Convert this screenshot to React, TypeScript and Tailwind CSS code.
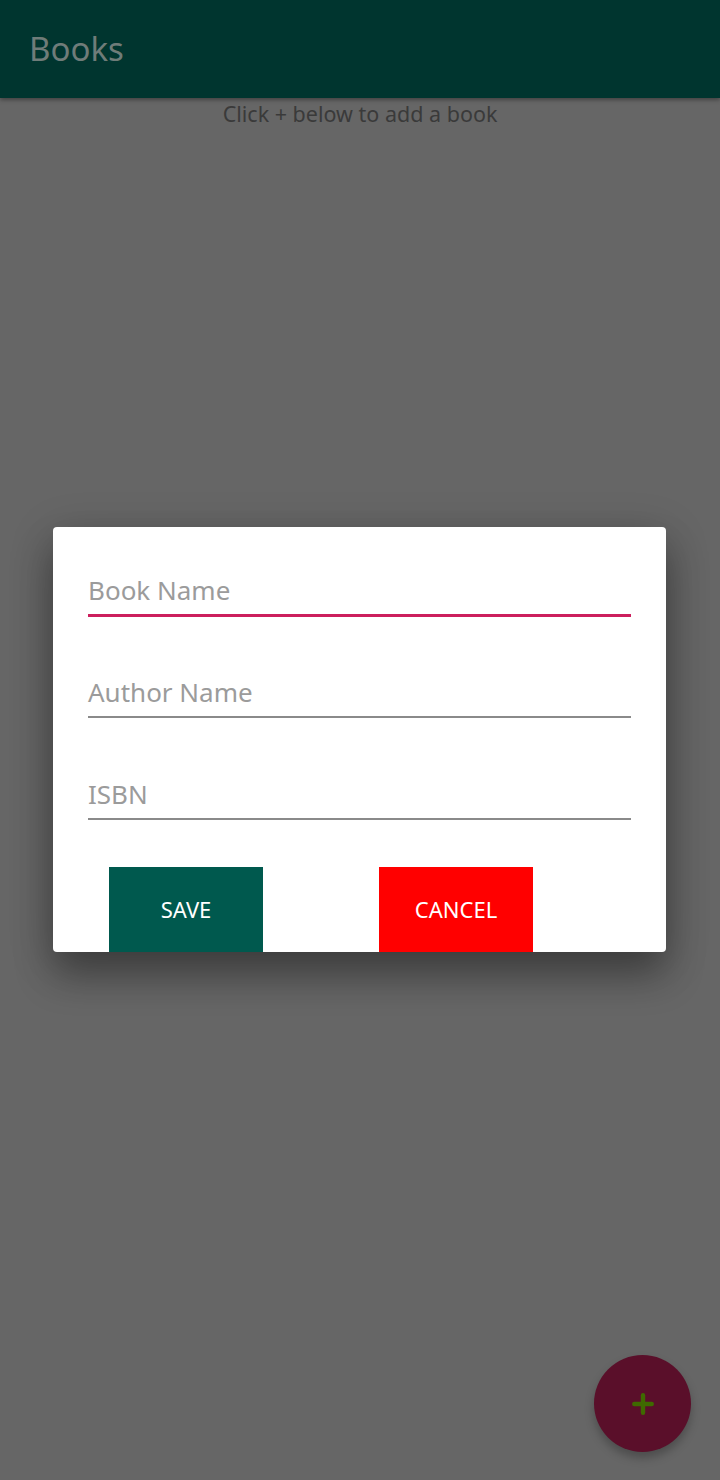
import { Plus } from "lucide-react";

const font = { fontFamily: '"Noto Sans", "Open Sans", sans-serif' };

function Field({ label, active }: { label: string; active?: boolean }) {
	return (
		<div className="flex flex-col">
			<div className="text-[26px] leading-[34px] text-[#9b9b9b] pb-[7px]">{label}</div>
			<div className={active ? "h-[3px] bg-[#cc1f5d]" : "h-[2px] bg-[#8a8a8a] mb-[1px]"} />
		</div>
	);
}

export default function App() {
	return (
		<div className="relative w-[720px] h-[1480px] bg-[#666666] overflow-hidden" style={font}>
			<header className="h-[98px] bg-[#00352f] flex items-center pl-[29px] shadow-[0_2px_4px_rgba(0,0,0,0.35)]">
				<h1 className="text-[33px] text-[#6f7c79]">Books</h1>
			</header>
			<p className="text-center text-[21.5px] leading-[32px] text-[#3a3a3a]">Click + below to add a book</p>

			<div className="absolute inset-0 flex items-center justify-center pr-[1px] pb-[1px]">
				<div className="w-[613px] h-[425px] bg-white rounded-[4px] shadow-[0_24px_38px_rgba(0,0,0,0.3),0_9px_46px_rgba(0,0,0,0.2)] overflow-hidden px-[35px] pt-[46px] flex flex-col">
					<div className="flex flex-col gap-[58px]">
						<Field label="Book Name" active />
						<Field label="Author Name" />
						<Field label="ISBN" />
					</div>
					<div className="flex mt-[46px] pl-[21px] gap-[116px]">
						<button className="w-[154px] h-[88px] bg-[#00594e] text-white text-[22px] uppercase pb-[4px]">Save</button>
						<button className="w-[154px] h-[88px] bg-[#ff0000] text-white text-[22px] uppercase pb-[4px]">Cancel</button>
					</div>
				</div>
			</div>

			<button className="absolute right-[29px] bottom-[28px] w-[97px] h-[97px] rounded-full bg-[#5a0f2a] flex items-center justify-center shadow-[0_6px_10px_rgba(0,0,0,0.25)]">
				<Plus className="w-[30px] h-[30px] text-[#3f6a00]" strokeWidth={3.5} />
			</button>
		</div>
	);
}
